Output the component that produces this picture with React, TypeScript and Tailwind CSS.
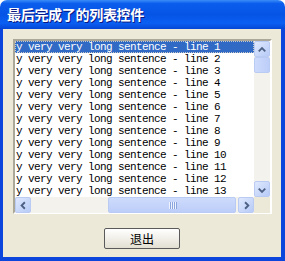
import React from "react";

const rows = Array.from({ length: 13 }, (_, i) => `y very very long sentence - line ${i + 1}`);

function ArrowBtn({ dir }: { dir: "up" | "down" | "left" | "right" }) {
  const d = {
    up: "M4 9.5 L7.5 6 L11 9.5",
    down: "M4 6.5 L7.5 10 L11 6.5",
    left: "M9.5 4 L6 7.5 L9.5 11",
    right: "M6.5 4 L10 7.5 L6.5 11",
  }[dir];
  return (
    <div className="w-[16px] h-[16px] shrink-0 rounded-[2px] border border-[#b9cbf3] bg-gradient-to-br from-[#dfe8fd] to-[#b7cbf7] flex items-center justify-center">
      <svg width="15" height="15" viewBox="0 0 15 15">
        <path d={d} fill="none" stroke="#4d6185" strokeWidth="2" />
      </svg>
    </div>
  );
}

export default function App() {
  return (
    <div className="w-[285px] h-[261px] flex flex-col font-['Noto_Sans_CJK_SC',sans-serif]">
      <div className="h-[29px] shrink-0 rounded-t-[7px] bg-[linear-gradient(to_bottom,#3b8cf8_0%,#0b5ded_12%,#0654e6_50%,#0a5ff2_80%,#0546d6_100%)] flex items-center pl-[7px]">
        <span className="text-white font-bold text-[14px] tracking-[-0.3px] [text-shadow:1px_1px_0_#0a1883]">最后完成了的列表控件</span>
      </div>
      <div className="flex-1 bg-[#ece9d8] border-l-[3px] border-r-[4px] border-b-[4px] border-[#0b45dc] flex flex-col items-center pt-[10px]">
        <div className="w-[259px] h-[175px] ml-[1px] border-2 border-t-[#aca899] border-l-[#aca899] border-b-white border-r-white">
          <div className="w-full h-full flex flex-col bg-white">
            <div className="flex flex-1">
              <div className="flex-1 overflow-hidden font-['Liberation_Mono',monospace] text-[11px] tracking-[-0.6px] leading-[12px]">
                {rows.map((r, i) => (
                  <div
                    key={i}
                    className={
                      i === 0
                        ? "h-[12px] bg-[#316ac5] text-white border border-dotted border-[#c8c8c8] whitespace-nowrap leading-[10px]"
                        : "h-[12px] text-black whitespace-nowrap pl-[1px]"
                    }
                  >
                    {r}
                  </div>
                ))}
              </div>
              <div className="w-[16px] flex flex-col bg-[#f4f2ec]">
                <ArrowBtn dir="up" />
                <div className="h-[16px] rounded-[2px] border border-[#b9cbf3] bg-gradient-to-r from-[#cddbfc] to-[#bccdf8]" />
                <div className="flex-1" />
                <ArrowBtn dir="down" />
              </div>
            </div>
            <div className="h-[16px] flex">
              <div className="flex-1 flex bg-[#f4f2ec]">
                <ArrowBtn dir="left" />
                <div className="w-[77px]" />
                <div className="w-[128px] rounded-[2px] border border-[#b9cbf3] bg-gradient-to-b from-[#cddbfc] to-[#bccdf8] flex items-center justify-center gap-[1px]">
                  {[0, 1, 2, 3].map((k) => (
                    <div key={k} className="w-[1px] h-[7px] bg-[#eef3fe] shadow-[1px_0_0_#8aa4de]" />
                  ))}
                </div>
                <div className="flex-1" />
                <ArrowBtn dir="right" />
              </div>
              <div className="w-[16px] bg-[#ece9d8]" />
            </div>
          </div>
        </div>
        <button className="mt-[14px] w-[76px] h-[21px] rounded-[2px] border border-[#5a5a5a] bg-gradient-to-b from-white to-[#e2dfd2] text-[12px] text-black leading-none">
          退出
        </button>
      </div>
    </div>
  );
}
